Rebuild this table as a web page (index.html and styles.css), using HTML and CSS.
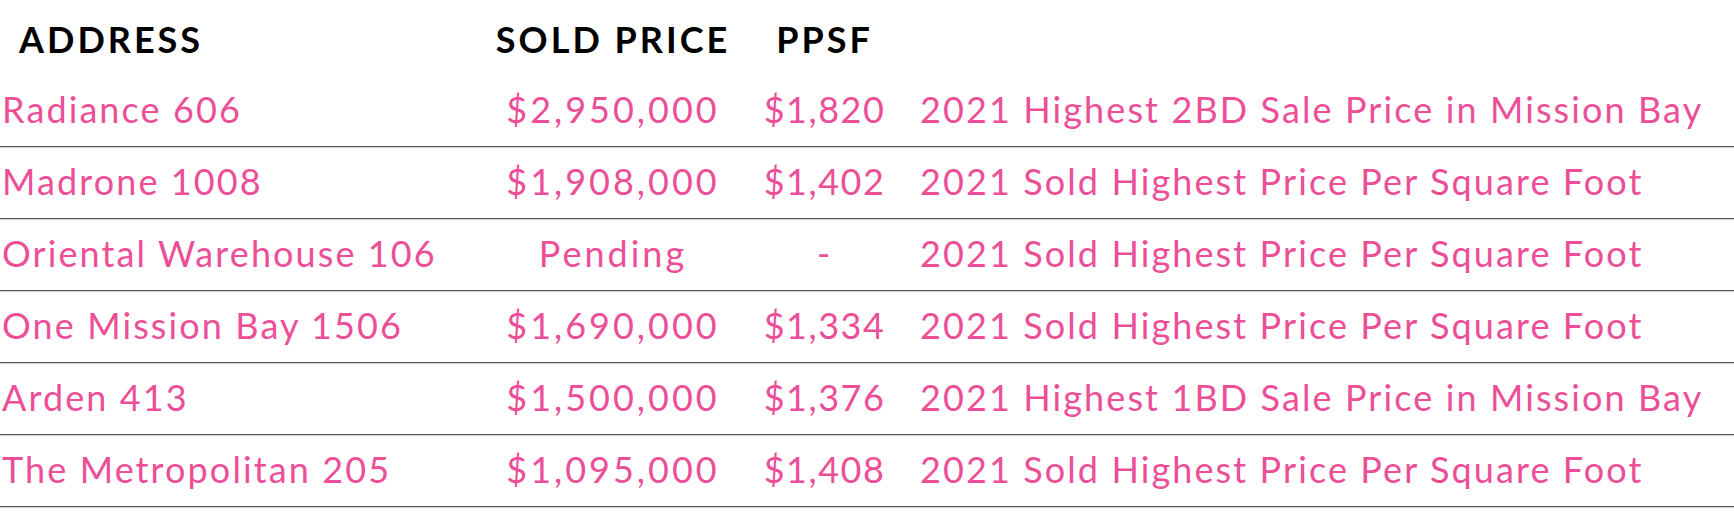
FILE: index.html
```html
<!DOCTYPE html>
<html>
<head>
<meta charset="utf-8">
<link rel="stylesheet" href="styles.css">
</head>
<body>
<div class="sales">
  <div class="row head">
    <div class="c addr">ADDRESS</div>
    <div class="c price">SOLD PRICE</div>
    <div class="c ppsf">PPSF</div>
    <div class="c note"></div>
  </div>
  <div class="row item">
    <div class="c addr">Radiance 606</div>
    <div class="c price">$2,950,000</div>
    <div class="c ppsf">$1,820</div>
    <div class="c note">2021 Highest 2BD Sale Price in Mission Bay</div>
  </div>
  <div class="row item">
    <div class="c addr">Madrone 1008</div>
    <div class="c price">$1,908,000</div>
    <div class="c ppsf">$1,402</div>
    <div class="c note">2021 Sold Highest Price Per Square Foot</div>
  </div>
  <div class="row item">
    <div class="c addr">Oriental Warehouse 106</div>
    <div class="c price">Pending</div>
    <div class="c ppsf">-</div>
    <div class="c note">2021 Sold Highest Price Per Square Foot</div>
  </div>
  <div class="row item">
    <div class="c addr">One Mission Bay 1506</div>
    <div class="c price">$1,690,000</div>
    <div class="c ppsf">$1,334</div>
    <div class="c note">2021 Sold Highest Price Per Square Foot</div>
  </div>
  <div class="row item">
    <div class="c addr">Arden 413</div>
    <div class="c price">$1,500,000</div>
    <div class="c ppsf">$1,376</div>
    <div class="c note">2021 Highest 1BD Sale Price in Mission Bay</div>
  </div>
  <div class="row item">
    <div class="c addr">The Metropolitan 205</div>
    <div class="c price">$1,095,000</div>
    <div class="c ppsf">$1,408</div>
    <div class="c note">2021 Sold Highest Price Per Square Foot</div>
  </div>
</div>
</body>
</html>
```

FILE: styles.css
```css
html, body {
  margin: 0;
  padding: 0;
  background: #ffffff;
}

.sales {
  width: 1734px;
  font-family: "Lato", "Liberation Sans", sans-serif;
}

.row {
  display: grid;
  grid-template-columns: 479px 268px 155px 1fr;
  align-items: end;
}

.c {
  white-space: nowrap;
}

.head {
  height: 76px;
  color: #000000;
  font-weight: 700;
  font-size: 36px;
  letter-spacing: 3px;
  line-height: 1;
}

.head .c {
  padding-bottom: 19px;
}

.head .addr {
  padding-left: 19px;
}

.item {
  height: 70px;
  border-bottom: 1px solid #5a5a5a;
  box-shadow: 0 1px 0 #d2d2d2;
  margin-bottom: 1px;
  color: #ec4f97;
  font-weight: 400;
  font-size: 36px;
  line-height: 1;
}

.item .c {
  padding-bottom: 19px;
}

.item .addr {
  letter-spacing: 2.1px;
}

.item .price {
  letter-spacing: 3px;
}

.item .ppsf {
  letter-spacing: 1.5px;
}

.item .note {
  letter-spacing: 2.1px;
}

.addr {
  padding-left: 2px;
  text-align: left;
}

.price, .ppsf {
  text-align: center;
}

.note {
  padding-left: 18px;
  text-align: left;
}
```
